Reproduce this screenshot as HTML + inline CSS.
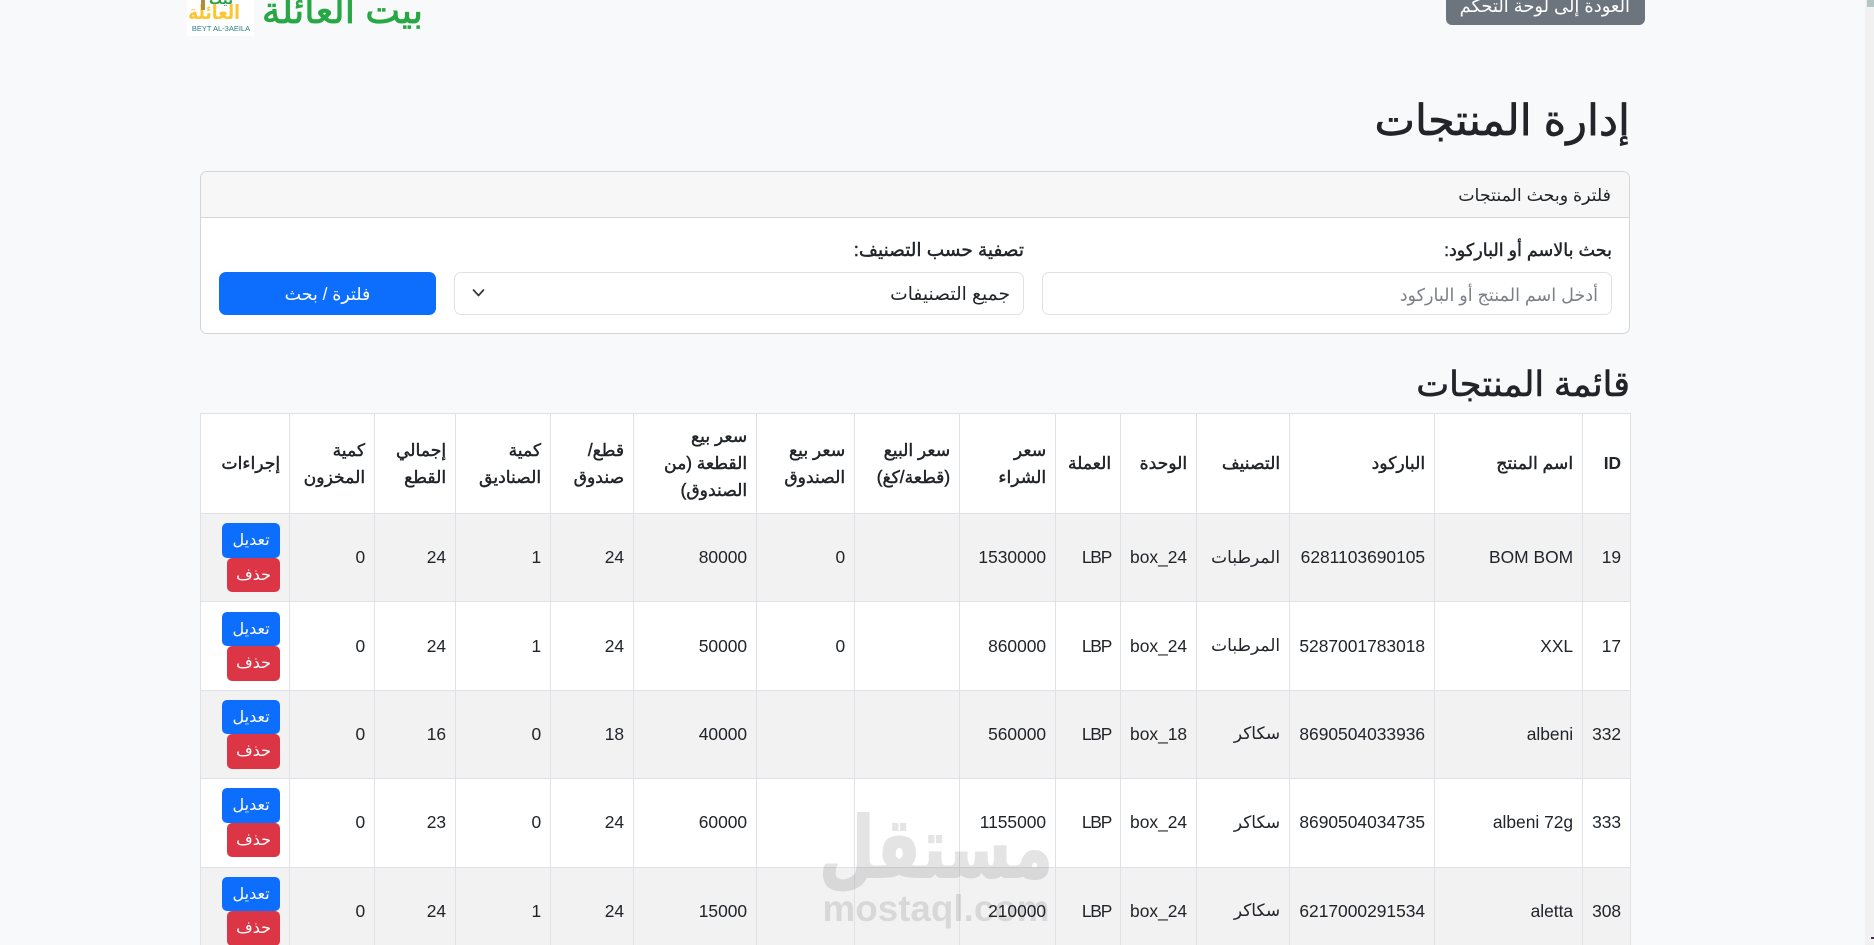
<!DOCTYPE html>
<html lang="ar" dir="rtl">
<head>
<meta charset="utf-8">
<title>إدارة المنتجات</title>
<style>
html,body{margin:0;padding:0;width:1874px;height:945px;overflow:hidden;background:#f8f9fa;}
body{position:relative;font-family:"Liberation Sans","DejaVu Sans",sans-serif;color:#212529;font-size:17.4px;}
.a{position:absolute;white-space:nowrap;line-height:1;}
.scroll{position:absolute;left:1865px;top:0;width:9px;height:945px;background:#f1f1f1;}
.thumb{position:absolute;left:1867px;top:0;width:7px;height:7px;background:#b4c6c1;}
.logo{position:absolute;left:187px;top:0;width:67px;height:36px;background:#fff;overflow:hidden;}
.back{position:absolute;left:1446px;top:-20px;width:199px;height:45px;background:#6c757d;border-radius:6px;color:#fff;}
.card{position:absolute;left:200px;top:171px;width:1428px;height:161px;border:1px solid #d4d5d6;border-radius:7px;background:#fff;overflow:hidden;}
.card .hd{position:absolute;left:0;top:0;right:0;height:45px;background:#f7f7f7;border-bottom:1px solid #d4d5d6;}
.inp{position:absolute;top:272px;height:41px;border:1px solid #dee2e6;border-radius:7px;background:#fff;}
.btn{position:absolute;left:219px;top:272px;width:217px;height:43px;background:#0d6efd;border-radius:7px;}
table{position:absolute;left:199.5px;top:413px;width:1430px;border-collapse:collapse;table-layout:fixed;background:#fff;}
th,td{border:1px solid #dee2e6;padding:0 8.4px 0 9.6px;text-align:right;vertical-align:middle;overflow:hidden;}
th{height:99px;font-weight:normal;font-size:17.2px;line-height:27px;white-space:normal;-webkit-text-stroke:.45px #212529;}
th b{font-size:17.4px;-webkit-text-stroke:0;}
td{height:87.4px;font-size:17.4px;white-space:nowrap;}
tbody tr:nth-child(odd) td{background:#f2f2f2;}
.ar{font-size:17px;}
.l{letter-spacing:-1.2px;}
.b{display:block;height:34.5px;line-height:36px;color:#fff;text-align:center;font-size:16px;}
.e{width:58px;background:#0d6efd;border-radius:5px;margin-right:0;}
.d{width:53px;background:#dc3545;border-radius:5px;}
.wm{position:absolute;color:#000;opacity:.1;white-space:nowrap;line-height:1;}
</style>
</head>
<body>

<div class="logo">
  <div class="a" style="left:12px;top:-7px;font-size:13px;font-weight:bold;color:#27a048;width:44px;text-align:center;">بيت</div>
  <div class="a" style="left:13px;top:4px;font-size:17px;font-weight:bold;color:#fcc531;width:40px;text-align:center;transform:scaleY(1.15);">العائلة</div>
  <div style="position:absolute;left:14px;top:0;width:4px;height:10px;background:#b08d3c;"></div>
  <div class="a" dir="ltr" style="left:2px;top:25px;font-size:7.5px;color:#2c7f86;width:64px;text-align:center;">BEYT AL-3AEILA</div>
</div>
<div class="a" style="left:244px;width:197px;top:-11px;font-size:37px;color:#28a745;text-align:center;line-height:44px;-webkit-text-stroke:.8px #28a745;">بيت العائلة</div>

<div class="back"><div class="a" style="right:15px;top:16px;font-size:17.9px;color:#fff;line-height:20px;">العودة إلى لوحة التحكم</div></div>

<div class="a" style="right:244px;top:97px;font-size:43px;line-height:48px;color:#212529;-webkit-text-stroke:.7px #212529;">إدارة المنتجات</div>

<div class="card"><div class="hd"></div></div>
<div class="a" style="right:263px;top:185px;font-size:17.4px;line-height:20px;">فلترة وبحث المنتجات</div>
<div class="a" style="right:262px;top:240px;font-size:17.6px;line-height:20px;-webkit-text-stroke:.45px #212529;">بحث بالاسم أو الباركود:</div>
<div class="a" style="right:850px;top:240px;font-size:18.5px;line-height:20px;-webkit-text-stroke:.45px #212529;">تصفية حسب التصنيف:</div>

<div class="inp" style="left:1042px;width:568px;"></div>
<div class="a" style="right:276px;top:285px;font-size:17.6px;line-height:20px;color:#7b8187;">أدخل اسم المنتج أو الباركود</div>

<div class="inp" style="left:454px;width:568px;"></div>
<div class="a" style="right:864px;top:284px;font-size:18.7px;line-height:20px;">جميع التصنيفات</div>
<svg style="position:absolute;left:472px;top:288px" width="13" height="10" viewBox="0 0 13 10"><path d="M1.5 2l5 5.5 5-5.5" fill="none" stroke="#343a40" stroke-width="1.7" stroke-linecap="round" stroke-linejoin="round"/></svg>

<div class="btn"><div class="a" style="left:0;width:217px;top:12px;text-align:center;color:#fff;font-size:17.4px;line-height:20px;">فلترة / بحث</div></div>

<div class="a" style="right:244px;top:363px;font-size:35px;line-height:44px;color:#212529;-webkit-text-stroke:.6px #212529;">قائمة المنتجات</div>

<table>
<colgroup>
<col style="width:48px"><col style="width:148px"><col style="width:145px"><col style="width:93px"><col style="width:76px"><col style="width:65px"><col style="width:96px"><col style="width:105px"><col style="width:98px"><col style="width:123px"><col style="width:83px"><col style="width:95px"><col style="width:81px"><col style="width:85px"><col style="width:89px">
</colgroup>
<thead>
<tr>
<th><b>ID</b></th><th>اسم المنتج</th><th>الباركود</th><th>التصنيف</th><th>الوحدة</th><th>العملة</th><th>سعر الشراء</th><th>سعر البيع (قطعة/كغ)</th><th>سعر بيع الصندوق</th><th>سعر بيع القطعة (من الصندوق)</th><th>قطع/<br>صندوق</th><th>كمية الصناديق</th><th>إجمالي القطع</th><th>كمية المخزون</th><th>إجراءات</th>
</tr>
</thead>
<tbody>
<tr><td>19</td><td>BOM BOM</td><td>6281103690105</td><td class="ar">المرطبات</td><td>box_24</td><td class="l">LBP</td><td>1530000</td><td></td><td>0</td><td>80000</td><td>24</td><td>1</td><td>24</td><td>0</td><td class="act"><span class="b e">تعديل</span><span class="b d">حذف</span></td></tr>
<tr><td>17</td><td>XXL</td><td>5287001783018</td><td class="ar">المرطبات</td><td>box_24</td><td class="l">LBP</td><td>860000</td><td></td><td>0</td><td>50000</td><td>24</td><td>1</td><td>24</td><td>0</td><td class="act"><span class="b e">تعديل</span><span class="b d">حذف</span></td></tr>
<tr><td>332</td><td>albeni</td><td>8690504033936</td><td class="ar">سكاكر</td><td>box_18</td><td class="l">LBP</td><td>560000</td><td></td><td></td><td>40000</td><td>18</td><td>0</td><td>16</td><td>0</td><td class="act"><span class="b e">تعديل</span><span class="b d">حذف</span></td></tr>
<tr><td>333</td><td>albeni 72g</td><td>8690504034735</td><td class="ar">سكاكر</td><td>box_24</td><td class="l">LBP</td><td>1155000</td><td></td><td></td><td>60000</td><td>24</td><td>0</td><td>23</td><td>0</td><td class="act"><span class="b e">تعديل</span><span class="b d">حذف</span></td></tr>
<tr><td>308</td><td>aletta</td><td>6217000291534</td><td class="ar">سكاكر</td><td>box_24</td><td class="l">LBP</td><td>210000</td><td></td><td></td><td>15000</td><td>24</td><td>1</td><td>24</td><td>0</td><td class="act"><span class="b e">تعديل</span><span class="b d">حذف</span></td></tr>
</tbody>
</table>

<div class="wm" style="left:636px;width:600px;top:806px;text-align:center;font-size:84px;font-weight:bold;transform:scaleX(.76);-webkit-text-stroke:2px #000;">مستقل</div>
<div class="wm" dir="ltr" style="left:636px;width:600px;top:891px;text-align:center;font-size:36.8px;font-weight:bold;">mostaql.com</div>

<div class="scroll"></div>
<div class="thumb"></div>
<div style="position:absolute;left:1871px;top:937px;width:3px;height:2px;background:#4a2a55;"></div>

</body>
</html>
